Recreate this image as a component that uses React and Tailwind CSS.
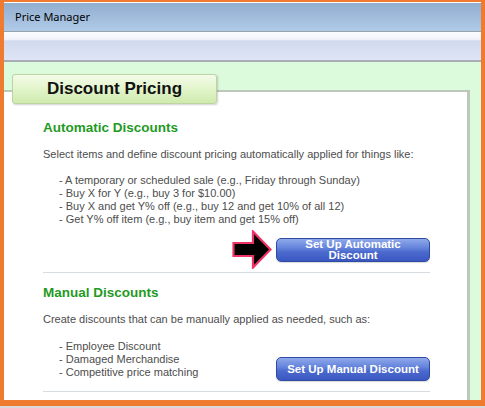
import React from "react";

const body = { fontFamily: '"Liberation Sans", Arial, sans-serif' };

function Arrow() {
  return (
    <svg width="40" height="39" viewBox="0 0 40 39">
      <polygon
        points="1.5,13 21,13 21,1.5 38.5,19.5 21,37.5 21,26 1.5,26"
        fill="#000"
        stroke="#ee3366"
        strokeWidth="2.2"
        strokeLinejoin="miter"
      />
    </svg>
  );
}

function BlueButton({ children }) {
  return (
    <div
      className="w-[154px] h-[24px] rounded-[5px] border border-[#2e4ba3] bg-[linear-gradient(to_bottom,#8fa9ea_0%,#6584dc_40%,#4a69cd_60%,#3b58c1_100%)] flex items-center justify-center text-center text-white font-bold text-[11.5px] leading-[11px] shadow-[0_1px_1px_rgba(0,0,0,0.15)]"
      style={body}
    >
      {children}
    </div>
  );
}

export default function App() {
  return (
    <div className="w-[485px] h-[408px] bg-[#dadada] overflow-hidden">
      <div className="h-[406px] border-t-2 border-l-4 border-r-4 border-b-[6px] border-[#ee7b30] flex flex-col bg-white">
        <div className="h-px bg-white" />
        <div className="h-[29px] border-b border-[#98a2ae] bg-[linear-gradient(to_bottom,#92aecf,#b0cbe8)] flex items-center pl-[11px]">
          <span className="text-[11px] text-black" style={{ fontFamily: '"Noto Sans", "Open Sans", sans-serif' }}>
            Price Manager
          </span>
        </div>
        <div className="h-[30px] border-b-2 border-[#a8adb6] bg-[linear-gradient(to_bottom,#fbfcfe_0%,#f1f4fa_26%,#d1daee_32%,#dee4f5_100%)]" />
        <div className="flex-1 bg-[#dcfadc] pt-[12px] flex flex-col">
          <div
            className="relative z-10 ml-[8px] w-[205px] h-[30px] rounded-[3px] border border-[#bcd5a3] bg-[linear-gradient(to_bottom,#f4fbea,#e2f4cb_50%,#cfeaae)] shadow-[1px_1px_2px_rgba(0,0,0,0.18)] flex items-center justify-center"
          >
            <span className="text-[17px] font-bold text-[#111]" style={body}>
              Discount Pricing
            </span>
          </div>
          <div className="-mt-[14px] mr-[11px] flex-1 bg-white border-t-2 border-r-[3px] border-[#bdc8bb] pl-[39px] pr-[37px] pt-[28px]">
            <div className="text-[13.5px] leading-[16px] font-bold text-[#1f9a1f]" style={body}>
              Automatic Discounts
            </div>
            <div className="mt-[12px] text-[11px] leading-[13px] text-[#4d4d4d]" style={body}>
              Select items and define discount pricing automatically applied for things like:
            </div>
            <div className="mt-[13px] pl-[16px] text-[11px] leading-[13px] text-[#4d4d4d]" style={body}>
              <div>- A temporary or scheduled sale (e.g., Friday through Sunday)</div>
              <div>- Buy X for Y (e.g., buy 3 for $10.00)</div>
              <div>- Buy X and get Y% off (e.g., buy 12 and get 10% of all 12)</div>
              <div>- Get Y% off item (e.g., buy item and get 15% off)</div>
            </div>
            <div className="mt-[4px] flex justify-end items-center gap-[4px]">
              <Arrow />
              <BlueButton>
                <span>
                  Set Up Automatic
                  <br />
                  Discount
                </span>
              </BlueButton>
            </div>
            <div className="mt-[3px] h-px bg-[#d6dbe0]" />
            <div className="mt-[12px] text-[13.5px] leading-[16px] font-bold text-[#1f9a1f]" style={body}>
              Manual Discounts
            </div>
            <div className="mt-[12px] text-[11px] leading-[13px] text-[#4d4d4d]" style={body}>
              Create discounts that can be manually applied as needed, such as:
            </div>
            <div className="mt-[14px] flex justify-between items-start">
              <div className="pl-[16px] text-[11px] leading-[13px] text-[#4d4d4d]" style={body}>
                <div>- Employee Discount</div>
                <div>- Damaged Merchandise</div>
                <div>- Competitive price matching</div>
              </div>
              <div className="mt-[17px]">
                <BlueButton>Set Up Manual Discount</BlueButton>
              </div>
            </div>
            <div className="mt-[10px] h-px bg-[#d6dbe0]" />
          </div>
        </div>
      </div>
    </div>
  );
}
